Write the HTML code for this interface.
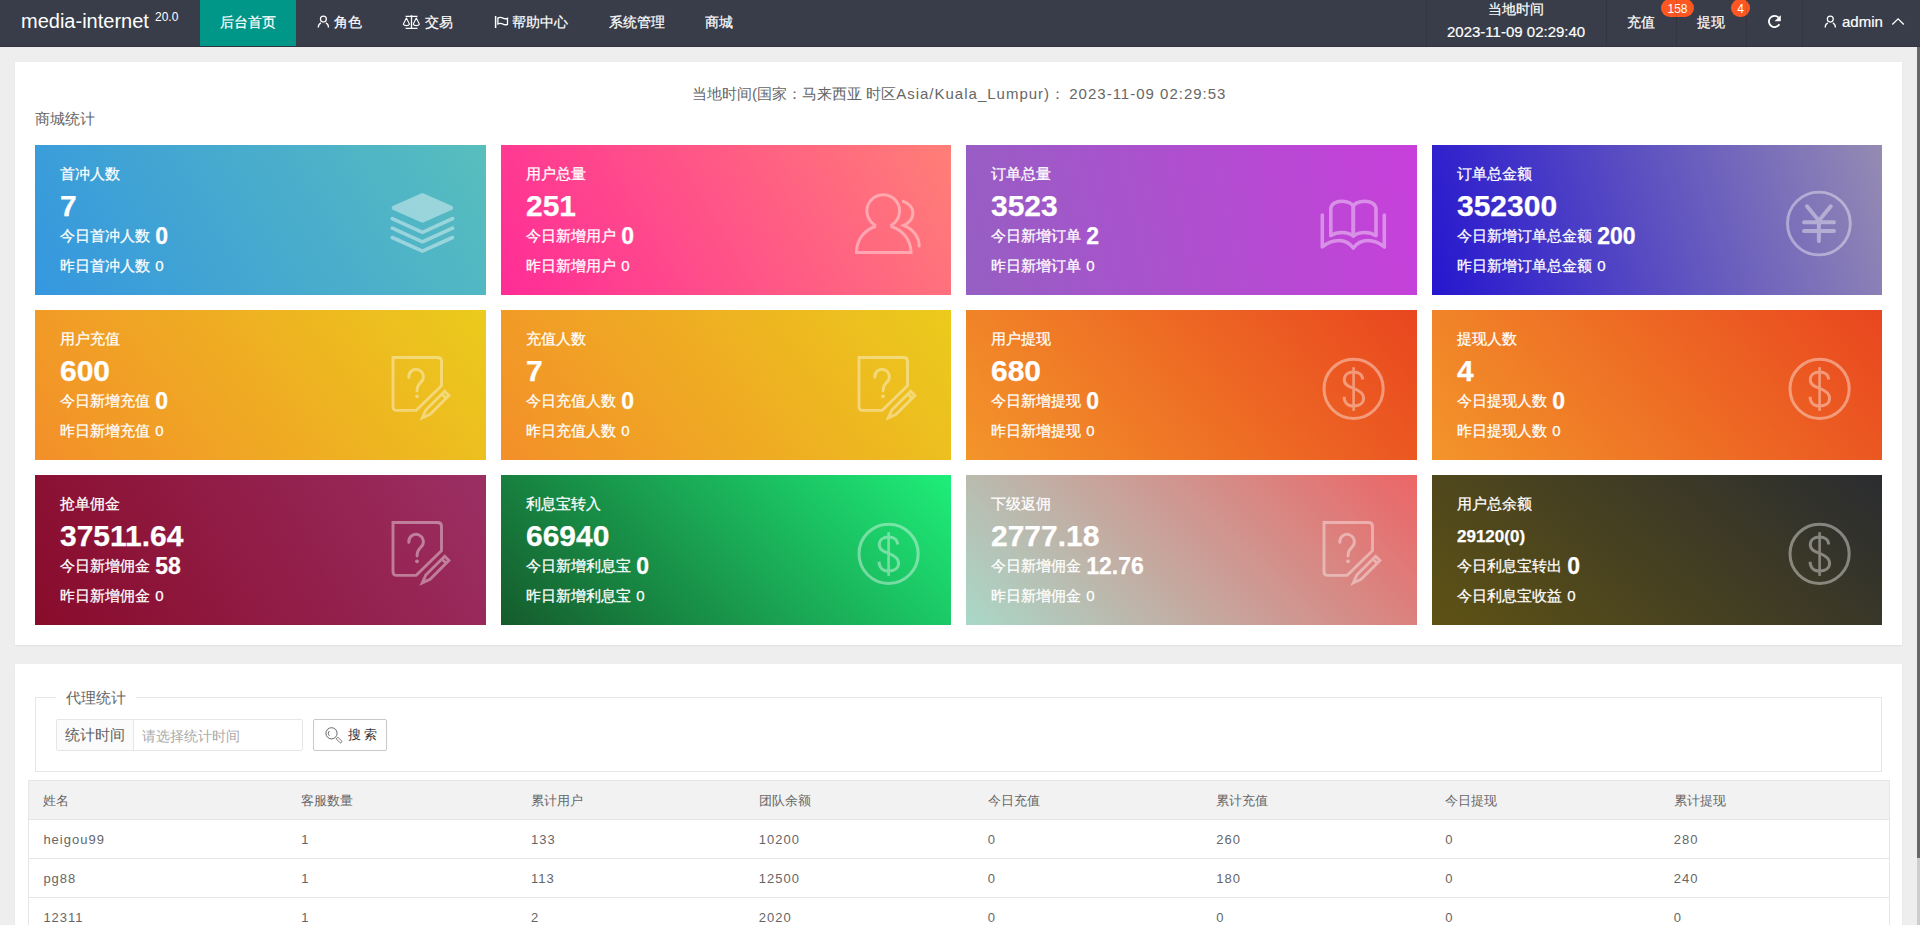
<!DOCTYPE html>
<html><head><meta charset="utf-8">
<style>
*{box-sizing:border-box;margin:0;padding:0}
html,body{width:1920px;height:925px;overflow:hidden}
body{background:#eeeeee;font-family:"Liberation Sans",sans-serif;position:relative;color:#333}
.abs{position:absolute;white-space:nowrap}
.hdr{position:absolute;left:0;top:0;width:1920px;height:47px;background:#393d49;border-bottom:1px solid #30333d}
.hdr .logo{left:21px;top:9px;color:#fff;font-size:20px;line-height:24px}
.hdr .logo sup{font-size:12px;position:absolute;left:134px;top:1px;line-height:14px}
.on{position:absolute;left:200px;top:0;width:96px;height:46px;background:#009688}
.nt{color:#fff;font-size:14px;line-height:16px;top:14px;-webkit-text-stroke:0.2px #fff}
.sep{position:absolute;top:0;width:1px;height:46px;background:rgba(0,0,0,.1)}
.badge{position:absolute;top:-1px;height:18px;border-radius:9px;background:#ff5722;color:#fff;font-size:12px;line-height:20px;text-align:center}
.sb{position:absolute;left:1917px;top:47px;width:3px;height:878px;background:#cdcdcd}
.sb i{position:absolute;left:0;top:0;width:3px;height:811px;background:#686868}
.panel{position:absolute;left:15px;width:1887px;background:#fff;box-shadow:0 1px 2px rgba(0,0,0,.06)}
.p1{top:62px;height:583px}
.p2{top:664px;height:300px}
.tline{left:692px;top:85px;color:#666;font-size:15px;line-height:18px}
.ls{letter-spacing:1px}
.ttl{left:35px;top:110px;color:#666;font-size:15px;line-height:18px}
.fs{position:absolute;left:35px;top:697px;width:1847px;height:75px;border:1px solid #e6e6e6}
.lg{left:56px;top:688px;width:80px;height:20px;background:#fff}
.lgt{left:66px;top:689px;color:#666;font-size:15px;line-height:18px}
.ig{position:absolute;left:56px;top:719px;width:247px;height:32px;border:1px solid #e6e6e6;border-radius:2px;background:#fff}
.ig .lb{position:absolute;left:0;top:0;width:77px;height:30px;background:#fbfbfb;border-right:1px solid #e6e6e6}
.igt{color:#606060;font-size:15px;line-height:18px;top:726px}
.ph{color:#aaa;font-size:14px;line-height:18px;top:727px;left:142px}
.btn{position:absolute;left:313px;top:719px;width:74px;height:32px;border:1px solid #c9c9c9;border-radius:2px;background:#fff}
.bt{left:348px;top:727px;color:#333;font-size:13px;line-height:16px;letter-spacing:3px}
.tb{position:absolute;left:28px;top:780px;width:1862px;height:160px;border:1px solid #e6e6e6;background:#fff}
.th{position:absolute;left:29px;top:781px;width:1860px;height:38px;background:#f2f2f2}
.hl{position:absolute;left:29px;width:1860px;height:1px;background:#e6e6e6}
.tc{color:#666;font-size:13px;line-height:16px}
.td{color:#666;font-size:13px;line-height:16px;letter-spacing:1px}
.card{position:absolute;height:150px;color:#fff;overflow:hidden;-webkit-text-stroke:0.25px #fff}
.card .t{position:absolute;left:25px;top:20px;font-size:15px;line-height:18px;white-space:nowrap}
.card .n{position:absolute;left:25px;top:44px;font-size:30px;font-weight:bold;line-height:34px;white-space:nowrap}
.card .n.small{font-size:17px;top:52px;line-height:20px}
.card .l1{position:absolute;left:25px;top:79px;font-size:15px;line-height:24px;white-space:nowrap}
.card .l1 b{margin-left:1px;font-size:23px;vertical-align:top;position:relative;top:0}
.card .l2{position:absolute;left:25px;top:112px;font-size:15px;line-height:18px;white-space:nowrap}
.card .v2{margin-left:1px}
.card svg.ic{position:absolute;left:0;top:0}
</style></head><body>
<div class="hdr">
  <div class="abs logo">media-internet<sup>20.0</sup></div>
  <div class="on"></div>
  <div class="abs nt" style="left:220px">后台首页</div>
  <svg class="abs" style="left:0;top:0" width="1920" height="46" viewBox="0 0 1920 46">
    <g fill="none" stroke="#fff" stroke-width="1.4">
      <circle cx="323.4" cy="19.1" r="2.95" stroke-width="1.25"/>
      <path d="M318.3,27.6 C318.3,25.2 319.3,23.6 320.9,22.8 M325.9,22.8 C327.5,23.6 328.5,25.2 328.5,27.6" stroke-width="1.3"/>
      <path d="M405.6,16.4 L417.5,16.4 M411.5,16.4 L411.5,28.4 M405.6,28.4 L417.5,28.4" stroke-width="1.3"/>
      <circle cx="411.5" cy="16.3" r="1.1" fill="#fff" stroke="none"/>
      <path d="M406.4,18 L403.3,24.2 A3.2,1.9 0 0 0 409.5,24.2 Z M416.3,18 L413.2,24.2 A3.2,1.9 0 0 0 419.4,24.2 Z" stroke-width="1.1" stroke-linejoin="round"/>
      <path d="M495.6,16 L495.6,28" stroke-width="1.5"/>
      <path d="M497.9,17.9 C500,17 501.5,17.3 503,18.1 C504.5,18.9 506,19 507.5,18.3 L507.5,24.3 C506,25 504.5,24.9 503,24.1 C501.5,23.3 500,23 497.9,23.9 Z" stroke-width="1.3"/>
      <path d="M1778.6,17.6 A5.6,5.6 0 1 0 1779.4,24.2" stroke-width="1.8"/>
      <path d="M1775.2,20.9 L1780.5,15.8 L1780.5,20.9 Z" fill="#fff" stroke="#fff" stroke-width=".6"/>
      <circle cx="1830.3" cy="19.1" r="2.95" stroke-width="1.25"/>
      <path d="M1825.2,27.6 C1825.2,25.2 1826.2,23.6 1827.8,22.8 M1832.8,22.8 C1834.4,23.6 1835.4,25.2 1835.4,27.6" stroke-width="1.3"/>
      <path d="M1892.3,24.5 L1898.1,18.8 L1903.8,24.5" stroke-width="1.3"/>
    </g>
  </svg>
  <div class="abs nt" style="left:334px">角色</div>
  <div class="abs nt" style="left:425px">交易</div>
  <div class="abs nt" style="left:512px">帮助中心</div>
  <div class="abs nt" style="left:609px">系统管理</div>
  <div class="abs nt" style="left:705px">商城</div>
  <div class="abs nt" style="left:1488px;top:1px">当地时间</div>
  <div class="abs nt" style="left:1447px;top:24px;font-size:15px">2023-11-09 02:29:40</div>
  <div class="abs nt" style="left:1627px">充值</div>
  <div class="abs nt" style="left:1697px">提现</div>
  <div class="badge" style="left:1661px;width:33px">158</div>
  <div class="badge" style="left:1731px;width:19px">4</div>
  <div class="sep" style="left:1426px"></div>
  <div class="sep" style="left:1606px"></div>
  <div class="sep" style="left:1676px"></div>
  <div class="sep" style="left:1746px"></div>
  <div class="sep" style="left:1802px"></div>
  <div class="abs nt" style="left:1842px;top:13px;font-size:15px;line-height:18px">admin</div>
</div>
<div class="sb"><i></i></div>

<div class="panel p1"></div>
<div class="abs tline">当地时间(国家：马来西亚 时区<span class="ls">Asia/Kuala_Lumpur)</span>： <span class="ls">2023-11-09 02:29:53</span></div>
<div class="abs ttl">商城统计</div>
<div class="card" style="left:35px;top:145px;width:451px;background:linear-gradient(60deg,#3597df,#58bebd)">
  <div class="t">首冲人数</div>
  <div class="n">7</div>
  <div class="l1">今日首冲人数 <b>0</b></div>
  <div class="l2">昨日首冲人数 <span class="v2">0</span></div>
  <svg class="ic" width="451" height="150" viewBox="0 0 451 150" style="opacity:0.42"><g fill="#fff" stroke="#fff" stroke-linejoin="round" stroke-linecap="round">
   <path d="M358.6,62.9 L387.4,50.2 L416.2,62.9 L387.4,75.6 Z" stroke-width="4"/>
   <path d="M357.3,73.7 L387.4,87.3 L417.5,73.7 M357.3,83.2 L387.4,96.8 L417.5,83.2 M357.3,92.5 L387.4,106.1 L417.5,92.5" fill="none" stroke-width="3.6"/>
 </g></svg>
</div>
<div class="card" style="left:501px;top:145px;width:450px;background:linear-gradient(60deg,#ff2c97,#ff7f77)">
  <div class="t">用户总量</div>
  <div class="n">251</div>
  <div class="l1">今日新增用户 <b>0</b></div>
  <div class="l2">昨日新增用户 <span class="v2">0</span></div>
  <svg class="ic" width="451" height="150" viewBox="0 0 451 150" style="opacity:0.4"><g fill="none" stroke="#fff" stroke-width="3" stroke-linejoin="miter">
   <path d="M375,80.6 A16.3,16.3 0 1 1 389.5,80.6"/>
   <path d="M375,81.2 C363,85 355.5,95 355.5,107.5 L410,107.5 C410,95 402,85 389.5,81.2"/>
   <path d="M402.3,56.4 C415,61 415,75 402.8,80.3 C412,84 418.2,92 418.2,101" stroke-linecap="round"/>
 </g></svg>
</div>
<div class="card" style="left:966px;top:145px;width:451px;background:linear-gradient(78deg,#955fc3,#c83fdb)">
  <div class="t">订单总量</div>
  <div class="n">3523</div>
  <div class="l1">今日新增订单 <b>2</b></div>
  <div class="l2">昨日新增订单 <span class="v2">0</span></div>
  <svg class="ic" width="451" height="150" viewBox="0 0 451 150" style="opacity:0.4"><g fill="none" stroke="#fff" stroke-width="3.6" stroke-linecap="round" stroke-linejoin="round">
   <path d="M356.3,70 L356.3,102 C362,97 368,95.5 373,95.5 C379,95.5 384,98.5 387.3,103 C390.6,98.5 395.6,95.5 401.6,95.5 C406.6,95.5 412.6,97 418.3,102 L418.3,70"/>
   <path d="M364.8,90.6 L364.8,64 C364.8,59 370,56.2 376,56.2 C382,56.2 387.3,59 387.3,62 L387.3,91 C384,88.5 380,87.5 376,87.5 C372,87.5 368,88.5 364.8,90.6 Z"/>
   <path d="M410,90.6 L410,64 C410,59 404.8,56.2 398.8,56.2 C392.8,56.2 387.3,59 387.3,62 L387.3,91 C390.6,88.5 394.6,87.5 398.6,87.5 C402.6,87.5 406.6,88.5 410,90.6 Z"/>
 </g></svg>
</div>
<div class="card" style="left:1432px;top:145px;width:450px;background:linear-gradient(73deg,#2516cf,#958bb3)">
  <div class="t">订单总金额</div>
  <div class="n">352300</div>
  <div class="l1">今日新增订单总金额 <b>200</b></div>
  <div class="l2">昨日新增订单总金额 <span class="v2">0</span></div>
  <svg class="ic" width="451" height="150" viewBox="0 0 451 150" style="opacity:0.4"><g fill="none" stroke="#fff" stroke-linecap="round">
   <circle cx="386.9" cy="78.5" r="31.4" stroke-width="2.9"/>
   <path d="M375,61.3 L386.9,75.7 L398.8,61.3 M386.9,75.7 L386.9,96 M372,77.2 L402,77.2 M372,86 L402,86" stroke-width="4"/>
 </g></svg>
</div>
<div class="card" style="left:35px;top:310px;width:451px;background:linear-gradient(53deg,#f38f29,#ebcb1c)">
  <div class="t">用户充值</div>
  <div class="n">600</div>
  <div class="l1">今日新增充值 <b>0</b></div>
  <div class="l2">昨日新增充值 <span class="v2">0</span></div>
  <svg class="ic" width="451" height="150" viewBox="0 0 451 150" style="opacity:0.4"><g fill="none" stroke="#fff" stroke-width="2.9" stroke-linejoin="round" stroke-linecap="round">
   <path d="M358,47.5 L402.5,47.5 Q406.5,47.5 406.5,51.5 L406.5,75.7 L381.2,100.4 L362,100.4 Q358,100.4 358,96.4 Z" stroke-linejoin="miter"/>
   <path d="M373.8,67.4 A7.3,7.3 0 1 1 385.5,72.5 C383,75 382,76.5 382,81"/>
   <circle cx="382" cy="86.3" r="1.9" fill="#fff" stroke="none"/>
   <path d="M387.3,107.8 L390.8,100 L409.7,81.2 L413.9,85.4 L395.1,104.3 Z M406.9,84 L411.1,88.2" stroke-linejoin="miter"/>
 </g></svg>
</div>
<div class="card" style="left:501px;top:310px;width:450px;background:linear-gradient(53deg,#f38f29,#ebcb1c)">
  <div class="t">充值人数</div>
  <div class="n">7</div>
  <div class="l1">今日充值人数 <b>0</b></div>
  <div class="l2">昨日充值人数 <span class="v2">0</span></div>
  <svg class="ic" width="451" height="150" viewBox="0 0 451 150" style="opacity:0.4"><g fill="none" stroke="#fff" stroke-width="2.9" stroke-linejoin="round" stroke-linecap="round">
   <path d="M358,47.5 L402.5,47.5 Q406.5,47.5 406.5,51.5 L406.5,75.7 L381.2,100.4 L362,100.4 Q358,100.4 358,96.4 Z" stroke-linejoin="miter"/>
   <path d="M373.8,67.4 A7.3,7.3 0 1 1 385.5,72.5 C383,75 382,76.5 382,81"/>
   <circle cx="382" cy="86.3" r="1.9" fill="#fff" stroke="none"/>
   <path d="M387.3,107.8 L390.8,100 L409.7,81.2 L413.9,85.4 L395.1,104.3 Z M406.9,84 L411.1,88.2" stroke-linejoin="miter"/>
 </g></svg>
</div>
<div class="card" style="left:966px;top:310px;width:451px;background:linear-gradient(50deg,#f3952a,#e9461f)">
  <div class="t">用户提现</div>
  <div class="n">680</div>
  <div class="l1">今日新增提现 <b>0</b></div>
  <div class="l2">昨日新增提现 <span class="v2">0</span></div>
  <svg class="ic" width="451" height="150" viewBox="0 0 451 150" style="opacity:0.4"><g fill="none" stroke="#fff" stroke-width="2.8" stroke-linecap="butt">
   <circle cx="387.6" cy="78.8" r="29.6" stroke-width="3"/>
   <path d="M387.6,57.2 L387.6,100.9" stroke-width="2.6"/>
   <path d="M396.6,69.5 C396.6,64.5 392.5,62 387.6,62 C382,62 378.3,65 378.3,69.8 C378.3,75 383,76.6 387.6,78.3 C393,80.3 397.6,82.8 397.6,88.3 C397.6,93.2 393.2,96 387.6,96 C381.8,96 378.1,92.6 378.1,86.8" stroke-width="3"/>
 </g></svg>
</div>
<div class="card" style="left:1432px;top:310px;width:450px;background:linear-gradient(50deg,#f3952a,#e9461f)">
  <div class="t">提现人数</div>
  <div class="n">4</div>
  <div class="l1">今日提现人数 <b>0</b></div>
  <div class="l2">昨日提现人数 <span class="v2">0</span></div>
  <svg class="ic" width="451" height="150" viewBox="0 0 451 150" style="opacity:0.4"><g fill="none" stroke="#fff" stroke-width="2.8" stroke-linecap="butt">
   <circle cx="387.6" cy="78.8" r="29.6" stroke-width="3"/>
   <path d="M387.6,57.2 L387.6,100.9" stroke-width="2.6"/>
   <path d="M396.6,69.5 C396.6,64.5 392.5,62 387.6,62 C382,62 378.3,65 378.3,69.8 C378.3,75 383,76.6 387.6,78.3 C393,80.3 397.6,82.8 397.6,88.3 C397.6,93.2 393.2,96 387.6,96 C381.8,96 378.1,92.6 378.1,86.8" stroke-width="3"/>
 </g></svg>
</div>
<div class="card" style="left:35px;top:475px;width:451px;background:linear-gradient(60deg,#880b2a,#9b2f64)">
  <div class="t">抢单佣金</div>
  <div class="n">37511.64</div>
  <div class="l1">今日新增佣金 <b>58</b></div>
  <div class="l2">昨日新增佣金 <span class="v2">0</span></div>
  <svg class="ic" width="451" height="150" viewBox="0 0 451 150" style="opacity:0.4"><g fill="none" stroke="#fff" stroke-width="2.9" stroke-linejoin="round" stroke-linecap="round">
   <path d="M358,47.5 L402.5,47.5 Q406.5,47.5 406.5,51.5 L406.5,75.7 L381.2,100.4 L362,100.4 Q358,100.4 358,96.4 Z" stroke-linejoin="miter"/>
   <path d="M373.8,67.4 A7.3,7.3 0 1 1 385.5,72.5 C383,75 382,76.5 382,81"/>
   <circle cx="382" cy="86.3" r="1.9" fill="#fff" stroke="none"/>
   <path d="M387.3,107.8 L390.8,100 L409.7,81.2 L413.9,85.4 L395.1,104.3 Z M406.9,84 L411.1,88.2" stroke-linejoin="miter"/>
 </g></svg>
</div>
<div class="card" style="left:501px;top:475px;width:450px;background:linear-gradient(45deg,#155b2c,#1eee79)">
  <div class="t">利息宝转入</div>
  <div class="n">66940</div>
  <div class="l1">今日新增利息宝 <b>0</b></div>
  <div class="l2">昨日新增利息宝 <span class="v2">0</span></div>
  <svg class="ic" width="451" height="150" viewBox="0 0 451 150" style="opacity:0.4"><g fill="none" stroke="#fff" stroke-width="2.8" stroke-linecap="butt">
   <circle cx="387.6" cy="78.8" r="29.6" stroke-width="3"/>
   <path d="M387.6,57.2 L387.6,100.9" stroke-width="2.6"/>
   <path d="M396.6,69.5 C396.6,64.5 392.5,62 387.6,62 C382,62 378.3,65 378.3,69.8 C378.3,75 383,76.6 387.6,78.3 C393,80.3 397.6,82.8 397.6,88.3 C397.6,93.2 393.2,96 387.6,96 C381.8,96 378.1,92.6 378.1,86.8" stroke-width="3"/>
 </g></svg>
</div>
<div class="card" style="left:966px;top:475px;width:451px;background:linear-gradient(45deg,#a9d8c8,#ec6566)">
  <div class="t">下级返佣</div>
  <div class="n">2777.18</div>
  <div class="l1">今日新增佣金 <b>12.76</b></div>
  <div class="l2">昨日新增佣金 <span class="v2">0</span></div>
  <svg class="ic" width="451" height="150" viewBox="0 0 451 150" style="opacity:0.4"><g fill="none" stroke="#fff" stroke-width="2.9" stroke-linejoin="round" stroke-linecap="round">
   <path d="M358,47.5 L402.5,47.5 Q406.5,47.5 406.5,51.5 L406.5,75.7 L381.2,100.4 L362,100.4 Q358,100.4 358,96.4 Z" stroke-linejoin="miter"/>
   <path d="M373.8,67.4 A7.3,7.3 0 1 1 385.5,72.5 C383,75 382,76.5 382,81"/>
   <circle cx="382" cy="86.3" r="1.9" fill="#fff" stroke="none"/>
   <path d="M387.3,107.8 L390.8,100 L409.7,81.2 L413.9,85.4 L395.1,104.3 Z M406.9,84 L411.1,88.2" stroke-linejoin="miter"/>
 </g></svg>
</div>
<div class="card" style="left:1432px;top:475px;width:450px;background:linear-gradient(40deg,#5e5214,#2a2c30)">
  <div class="t">用户总余额</div>
  <div class="n small">29120(0)</div>
  <div class="l1">今日利息宝转出 <b>0</b></div>
  <div class="l2">今日利息宝收益 <span class="v2">0</span></div>
  <svg class="ic" width="451" height="150" viewBox="0 0 451 150" style="opacity:0.4"><g fill="none" stroke="#fff" stroke-width="2.8" stroke-linecap="butt">
   <circle cx="387.6" cy="78.8" r="29.6" stroke-width="3"/>
   <path d="M387.6,57.2 L387.6,100.9" stroke-width="2.6"/>
   <path d="M396.6,69.5 C396.6,64.5 392.5,62 387.6,62 C382,62 378.3,65 378.3,69.8 C378.3,75 383,76.6 387.6,78.3 C393,80.3 397.6,82.8 397.6,88.3 C397.6,93.2 393.2,96 387.6,96 C381.8,96 378.1,92.6 378.1,86.8" stroke-width="3"/>
 </g></svg>
</div>

<div class="panel p2"></div>
<div class="fs"></div>
<div class="abs lg"></div>
<div class="abs lgt">代理统计</div>
<div class="ig"><div class="lb"></div></div>
<div class="abs igt" style="left:65px">统计时间</div>
<div class="abs ph">请选择统计时间</div>
<div class="btn"></div>
<svg class="abs" style="left:320px;top:722px" width="26" height="26" viewBox="320 722 26 26">
 <g fill="none" stroke="#555" stroke-width="0.9"><circle cx="331.5" cy="733.3" r="5.6"/><path d="M329.4,731 A3.2,3.2 0 0 0 329.4,735.8"/><path d="M336.2,738.9 L337.9,737.2 L341.4,740.7 A1.2,1.2 0 0 1 339.7,742.4 Z" stroke-width="0.8"/></g>
</svg>
<div class="abs bt">搜索</div>
<div class="tb"></div>
<div class="th"></div>
<div class="hl" style="top:819px"></div>
<div class="hl" style="top:858px"></div>
<div class="hl" style="top:897px"></div>
<div class="abs tc" style="left:43.4px;top:793px">姓名</div>
<div class="abs tc" style="left:301.3px;top:793px">客服数量</div>
<div class="abs tc" style="left:531px;top:793px">累计用户</div>
<div class="abs tc" style="left:758.8px;top:793px">团队余额</div>
<div class="abs tc" style="left:987.8px;top:793px">今日充值</div>
<div class="abs tc" style="left:1216.2px;top:793px">累计充值</div>
<div class="abs tc" style="left:1445.2px;top:793px">今日提现</div>
<div class="abs tc" style="left:1673.8px;top:793px">累计提现</div>
<div class="abs td" style="left:43.4px;top:832px">heigou99</div>
<div class="abs td" style="left:301.3px;top:832px">1</div>
<div class="abs td" style="left:531px;top:832px">133</div>
<div class="abs td" style="left:758.8px;top:832px">10200</div>
<div class="abs td" style="left:987.8px;top:832px">0</div>
<div class="abs td" style="left:1216.2px;top:832px">260</div>
<div class="abs td" style="left:1445.2px;top:832px">0</div>
<div class="abs td" style="left:1673.8px;top:832px">280</div>
<div class="abs td" style="left:43.4px;top:871px">pg88</div>
<div class="abs td" style="left:301.3px;top:871px">1</div>
<div class="abs td" style="left:531px;top:871px">113</div>
<div class="abs td" style="left:758.8px;top:871px">12500</div>
<div class="abs td" style="left:987.8px;top:871px">0</div>
<div class="abs td" style="left:1216.2px;top:871px">180</div>
<div class="abs td" style="left:1445.2px;top:871px">0</div>
<div class="abs td" style="left:1673.8px;top:871px">240</div>
<div class="abs td" style="left:43.4px;top:910px">12311</div>
<div class="abs td" style="left:301.3px;top:910px">1</div>
<div class="abs td" style="left:531px;top:910px">2</div>
<div class="abs td" style="left:758.8px;top:910px">2020</div>
<div class="abs td" style="left:987.8px;top:910px">0</div>
<div class="abs td" style="left:1216.2px;top:910px">0</div>
<div class="abs td" style="left:1445.2px;top:910px">0</div>
<div class="abs td" style="left:1673.8px;top:910px">0</div>
</body></html>
